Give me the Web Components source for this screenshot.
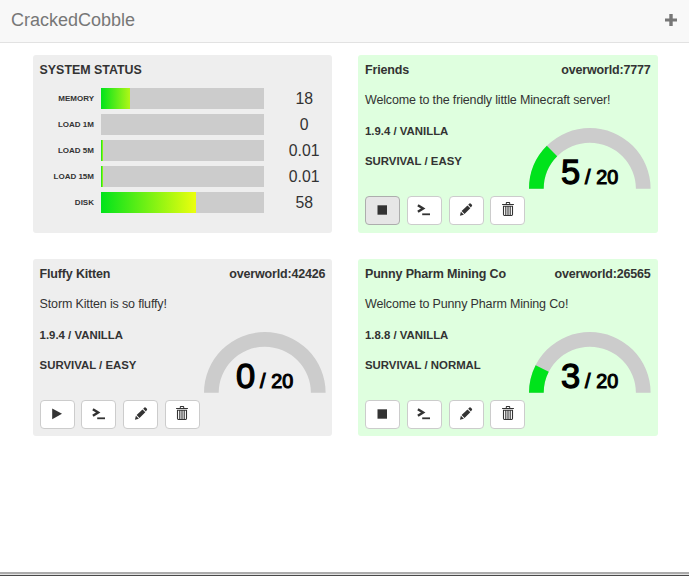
<!DOCTYPE html>
<html lang="en"><head><meta charset="utf-8"><title>CrackedCobble</title>
<style>
html,body{margin:0;height:100%;background:#fff}
body{font:13px/18px "Liberation Sans",Arial,sans-serif;color:#333;overflow:hidden}
</style></head><body>
<cobble-app>
<cobble-nav slot="nav">CrackedCobble</cobble-nav>
<system-card>
<status-bar label="MEMORY" value="18" fill="18"></status-bar>
<status-bar label="LOAD 1M" value="0" fill="0"></status-bar>
<status-bar label="LOAD 5M" value="0.01" fill="1.1"></status-bar>
<status-bar label="LOAD 15M" value="0.01" fill="1.1"></status-bar>
<status-bar label="DISK" value="58" fill="58"></status-bar>
</system-card>
<server-card name="Friends" address="overworld:7777" version="1.9.4 / VANILLA" mode="SURVIVAL / EASY" players="5" running pressed>Welcome to the friendly little Minecraft server!</server-card>
<server-card name="Fluffy Kitten" address="overworld:42426" version="1.9.4 / VANILLA" mode="SURVIVAL / EASY" players="0">Storm Kitten is so fluffy!</server-card>
<server-card name="Punny Pharm Mining Co" address="overworld:26565" version="1.8.8 / VANILLA" mode="SURVIVAL / NORMAL" players="3" running>Welcome to Punny Pharm Mining Co!</server-card>
</cobble-app>
<script>
class Base extends HTMLElement{
  connectedCallback(){ if(!this.shadowRoot) this.attachShadow({mode:'open'}).innerHTML=this.render(); }
  a(n){ return this.getAttribute(n)||''; }
}
customElements.define('cobble-app',class extends Base{render(){return `
<style>
:host{display:flex;flex-direction:column;height:100vh}
main{flex:1;display:grid;grid-template-columns:299.4px 299.2px;grid-template-rows:178px 177.4px;gap:26px;padding:12px 0 0 33px;box-sizing:border-box}
footer{height:1px;background:#e2e2e2;border-top:2px solid #ababab;border-bottom:1px solid #484848}
</style><slot name="nav"></slot><main><slot></slot></main><footer></footer>`}});

customElements.define('cobble-nav',class extends Base{render(){return `
<style>
:host{display:flex;justify-content:space-between;align-items:center;height:43px;box-sizing:border-box;padding:0 12px 2px 11px;background:#f8f8f8;border-bottom:1px solid #e2e2e2;color:#777;font-size:18px;line-height:20px}
svg{display:block;width:12px;height:12px}
</style><span><slot></slot></span><svg viewBox="0 0 12 12"><path d="M4.3 0h3.4v4.4H12v3.2H7.7V12H4.3V7.6H0V4.4h4.3z" fill="#777"/></svg>`}});

customElements.define('system-card',class extends Base{render(){return `
<style>
:host{display:block;box-sizing:border-box;background:#eee;border-radius:3px;padding:6px 7px 6px 6.6px}
h2{margin:0 0 9px;font-size:12.4px;line-height:18px}
div{display:grid;row-gap:5px}
</style><h2>SYSTEM STATUS</h2><div><slot></slot></div>`}});

customElements.define('status-bar',class extends Base{render(){return `
<style>
:host{display:grid;grid-template-columns:54.4px 163px 1fr;column-gap:7px;align-items:center;height:21px}
b{font-size:8px;line-height:21px;text-align:right;white-space:nowrap}
.track{height:21px;background:#ccc}
.fill{height:100%;width:${this.a('fill')}%;background:linear-gradient(90deg,#00e31b,${+this.a('fill')>50?'#ecff0d':'#b0f617'})}
.val{font-size:15.8px;line-height:21px;justify-self:center;padding-left:12px}
</style><b>${this.a('label')}</b><div class="track"><div class="fill"></div></div><span class="val">${this.a('value')}</span>`}});

const icons={
  stop:'<path d="M2.5 2.3h9.5v9.4H2.5z"/>',
  play:'<path d="M2.2 1.4v10.8L12 6.8z"/>',
  console:'<path d="M.9 2.2 6.1 5.5.9 8.8" fill="none" stroke="#333" stroke-width="2.5"/><path d="M5.2 10.4h7.8v1.8H5.2z"/>',
  edit:'<path d="M.9 12.8l1-4 3 3zM2.6 8.1l5.9-5.7 2.8 2.8-5.8 5.8zM9.2 1.7l1.2-1.1q.8-.6 1.5.1l1 1q.6.7 0 1.4l-1 1.3z"/>',
  trash:'<path d="M1.1.9h3.7V0q0-1 .9-1h2.6q.9 0 .9 1v.9h3.7v1.2H1.1zM5.8.9h2.4V0H5.8z" fill-rule="evenodd"/><path d="M2.5 3v8.6q0 .9.9.9h7.2q.9 0 .9-.9V3" fill="none" stroke="#333" stroke-width="1.1"/><path d="M2 3.2h10M4.8 3v9M7 3v9M9.2 3v9" fill="none" stroke="#333" stroke-width="1.1"/>'
};
customElements.define('icon-button',class extends Base{render(){return `
<style>
:host{display:block}
button{display:flex;align-items:center;justify-content:center;width:35px;height:29px;padding:0 0 2px;box-sizing:border-box;border:1px solid #ccc;border-radius:4px;background:#fff}
:host([active]) button{background:#e6e6e6;border-color:#adadad}
svg{display:block;width:14px;height:14px;fill:#333;overflow:visible}
</style><button aria-label="${this.a('icon')}"><svg viewBox="0 0 14 14">${icons[this.a('icon')]}</svg></button>`}});

customElements.define('player-gauge',class extends Base{render(){
const n=+this.a('value'),t=Math.PI*(1-n/20),R=60.8,r=46.1,c=60.8;
const p=(q,u)=>`${(c+q*Math.cos(u)).toFixed(2)} ${(c-q*Math.sin(u)).toFixed(2)}`;
const arc=u=>`M0 ${c}A${R} ${R} 0 0 1 ${p(R,u)}L${p(r,u)}A${r} ${r} 0 0 0 ${c-r} ${c}z`;
return `
<style>
:host{display:block;width:121.6px;height:61px}
svg{display:block;overflow:visible}
text{fill:#000;font-family:"Liberation Sans",Arial,sans-serif}
</style><svg width="121.6" height="61"><path d="${arc(0)}" fill="#ccc"/>${n?`<path d="${arc(t)}" fill="#00e31b"/>`:''}
<text x="32" y="56" font-size="34.5" stroke="#000" stroke-width="1.3">${n}</text><text x="56" y="56" font-size="19.7" stroke="#000" stroke-width="1.1" textLength="33.3">/ 20</text></svg>`}});

customElements.define('server-card',class extends Base{render(){
const run=this.hasAttribute('running');
return `
<style>
:host{display:flex;flex-direction:column;box-sizing:border-box;border-radius:3px;padding:6px 7px 6px 6.6px;background:${run?'#dfffdf':'#eee'}}
header{display:flex;justify-content:space-between;font-weight:bold;font-size:12.5px;letter-spacing:-.17px;line-height:18px;white-space:nowrap}
.motd{margin:12px 0 0;font-size:12.5px;letter-spacing:-.15px;line-height:18px;white-space:nowrap}
.info{display:flex;justify-content:space-between;height:79.5px}
.meta{display:grid;grid-template-rows:18px 18px;align-content:start;row-gap:12.4px;padding-top:12.6px;font-weight:bold;font-size:11.4px;white-space:nowrap}
player-gauge{margin-top:19.2px}
.actions{display:flex;gap:6.8px;margin-top:7.5px}
</style>
<header><span>${this.a('name')}</span><span>${this.a('address')}</span></header>
<p class="motd"><slot></slot></p>
<div class="info"><div class="meta"><span>${this.a('version')}</span><span>${this.a('mode')}</span></div><player-gauge value="${this.a('players')}"></player-gauge></div>
<div class="actions"><icon-button icon="${run?'stop':'play'}" ${this.hasAttribute('pressed')?'active':''}></icon-button><icon-button icon="console"></icon-button><icon-button icon="edit"></icon-button><icon-button icon="trash"></icon-button></div>`}});
</script>
</body></html>
